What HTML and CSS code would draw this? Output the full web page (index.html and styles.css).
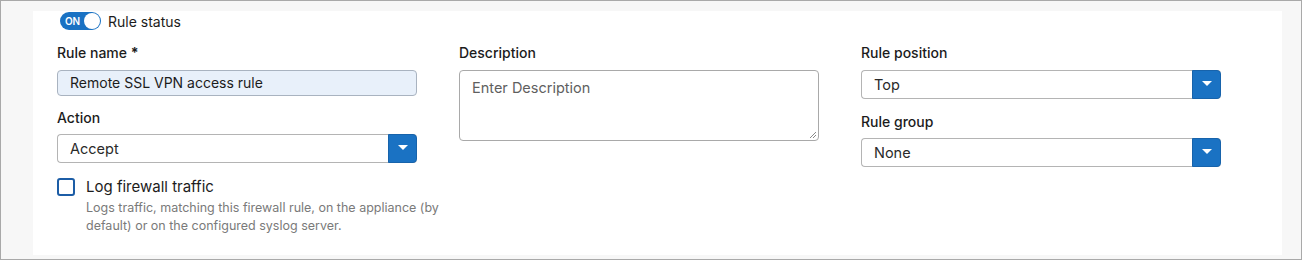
FILE: index.html
```html
<!DOCTYPE html>
<html lang="en">
<head>
    <meta charset="UTF-8">
    <title>Rule settings</title>
    <link rel="stylesheet" href="styles.css">
</head>
<body>
    <div class="frame">
        <div class="panel">
            <div class="status-row">
                <span class="toggle"><span class="toggle-text">ON</span><span class="knob"></span></span>
                <span class="status-label">Rule status</span>
            </div>

            <div class="columns">
                <div class="col">
                    <label class="field-label">Rule name <b>*</b></label>
                    <div class="text-input filled">Remote SSL VPN access rule</div>

                    <label class="field-label second">Action</label>
                    <div class="select">
                        <span class="select-value">Accept</span>
                        <span class="select-btn"><span class="arrow"></span></span>
                    </div>

                    <div class="check-row">
                        <span class="checkbox"></span>
                        <span class="check-label">Log firewall traffic</span>
                    </div>
                    <p class="help">Logs traffic, matching this firewall rule, on the appliance (by default) or on the configured syslog server.</p>
                </div>

                <div class="col">
                    <label class="field-label">Description</label>
                    <div class="textarea">
                        <span class="placeholder">Enter Description</span>
                        <svg class="grip" width="9" height="9" viewBox="0 0 9 9">
                            <path d="M8 2 L2 8 M8 5 L5 8" stroke="#8a8a8a" stroke-width="1" fill="none"/>
                        </svg>
                    </div>
                </div>

                <div class="col">
                    <label class="field-label">Rule position</label>
                    <div class="select">
                        <span class="select-value">Top</span>
                        <span class="select-btn"><span class="arrow"></span></span>
                    </div>

                    <label class="field-label third">Rule group</label>
                    <div class="select">
                        <span class="select-value">None</span>
                        <span class="select-btn"><span class="arrow"></span></span>
                    </div>
                </div>
            </div>
        </div>
    </div>
</body>
</html>
```

FILE: styles.css
```css
body {
    margin: 0;
    font-family: Inter, "Noto Sans", Arial, sans-serif;
    color: #1c1c1c;
    background-color: #ffffff;
}
.frame {
    width: 1302px;
    height: 260px;
    box-sizing: border-box;
    border: 1px solid #a9a9a9;
    background-color: #f7f7f7;
    padding: 10px 19px 4px 32px;
}
.panel {
    background-color: #ffffff;
    height: 100%;
    box-sizing: border-box;
    padding: 1px 0 0 24px;
}
.status-row {
    display: flex;
    align-items: center;
    height: 18px;
    margin-left: 3px;
}
.toggle {
    display: flex;
    align-items: center;
    justify-content: space-between;
    width: 41px;
    height: 18px;
    box-sizing: border-box;
    border-radius: 9px;
    background-color: #1a72c3;
    padding: 0 1px 0 5px;
}
.toggle-text {
    color: #ffffff;
    font-size: 10px;
    font-weight: 600;
    letter-spacing: -0.2px;
}
.knob {
    width: 16px;
    height: 16px;
    border-radius: 50%;
    background-color: #ffffff;
}
.status-label {
    margin-left: 7px;
    font-size: 14px;
}
.columns {
    display: grid;
    grid-template-columns: 360px 360px 360px;
    column-gap: 42px;
    margin-top: 13px;
}
.field-label {
    display: block;
    font-size: 14px;
    line-height: 20px;
    font-weight: 500;
    margin-bottom: 7px;
}
.field-label b {
    font-weight: 700;
}
.field-label.second {
    margin-top: 12px;
    margin-bottom: 6px;
}
.field-label.third {
    margin-top: 13px;
    margin-bottom: 6px;
}
.text-input {
    height: 26px;
    box-sizing: border-box;
    border: 1px solid #a9b3c0;
    border-radius: 4px;
    padding: 0 12px;
    font-size: 14px;
    line-height: 24px;
}
.text-input.filled {
    background-color: #e8f0fa;
}
.select {
    display: flex;
    height: 29px;
    box-sizing: border-box;
    border: 1px solid #b4b4b4;
    border-right: none;
    border-radius: 4px;
}
.select-value {
    flex: 1;
    padding-left: 12px;
    font-size: 14.5px;
    line-height: 27px;
    color: #2a2a2a;
}
.select-btn {
    width: 29px;
    margin: -1px 0;
    background-color: #1a72c3;
    border: 1px solid #1763ab;
    box-sizing: border-box;
    border-radius: 0 4px 4px 0;
    display: flex;
    align-items: center;
    justify-content: center;
}
.arrow {
    width: 0;
    height: 0;
    border-left: 5px solid transparent;
    border-right: 5px solid transparent;
    border-top: 5px solid #ffffff;
    margin-top: -2px;
}
.textarea {
    position: relative;
    height: 71px;
    box-sizing: border-box;
    border: 1px solid #a9a9a9;
    border-radius: 4px;
    padding: 6px 12px;
}
.placeholder {
    font-size: 14.5px;
    line-height: 20px;
    color: #5f5f5f;
}
.grip {
    position: absolute;
    right: 1px;
    bottom: 1px;
}
.check-row {
    display: flex;
    align-items: center;
    margin-top: 14px;
}
.checkbox {
    width: 18px;
    height: 18px;
    box-sizing: border-box;
    border: 2px solid #1c5da6;
    border-radius: 3px;
}
.check-label {
    margin-left: 11px;
    font-size: 15px;
}
.help {
    width: 368px;
    margin: 3px 0 0 29px;
    font-size: 12.5px;
    line-height: 18px;
    color: #7a7a7a;
}
```
